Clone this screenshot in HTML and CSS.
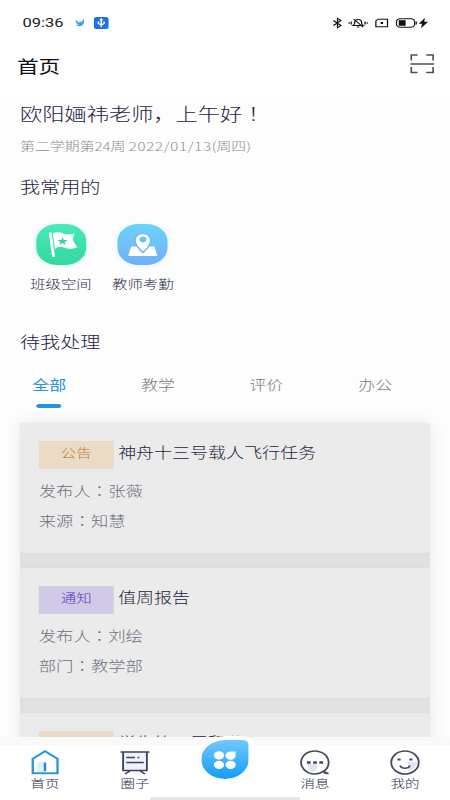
FILE: index.html
```html
<!DOCTYPE html>
<html lang="zh-CN">
<head>
<meta charset="utf-8">
<title>首页</title>
<link rel="stylesheet" href="styles.css">
</head>
<body>
<div class="app">
  <header class="top">
    <div class="status">
      <span class="time">09:36</span>
      <svg class="bird" viewBox="0 0 8 9"><path d="M.3 1.5 3.4 5 3.8 2.8 5 4.2 7.3.4 7 5.5Q5.8 8.5 3.2 8.3L.7 7.2 2.6 6.8Q.5 5 .3 1.5Z" fill="#3da3ea"/></svg>
      <svg class="usb" viewBox="0 0 12 12"><rect width="12" height="12" rx="2.5" fill="#1f6fe5"/><path d="M6 2v8M3.7 4.6v1.8L6 8l2.3-1.6V4.6M5 3.3 6 2l1 1.3" fill="none" stroke="#fff" stroke-width="1.2"/></svg>
      <svg class="sys" viewBox="0 0 77 12" fill="none" stroke="#111" stroke-width="1">
        <path d="M.8 3.5 6.8 8.5 4 10.8V1.2L6.8 3.5.8 8.5"/>
        <path d="M16.5 8.5q1.3-1 1.3-3.2 0-2.8 2.7-2.8t2.7 2.8q0 2.2 1.3 3.2zM19.5 10h2M16.8 2l7.8 8.2M15 4.5v3M26 4.5v3M13.3 5.3v1.4M27.7 5.3v1.4"/>
        <path d="M36.5 2.2H44v7.6h-9.3V4z"/><path d="M38.5 6h2" stroke-width="2"/>
        <rect x="51.2" y="1.7" width="14.5" height="8.6" rx="3"/><path d="M67 4.5v3"/><rect x="53" y="3.2" width="5.5" height="5.6" fill="#111" stroke="none"/>
        <path d="M74 .8 69 6.7h2.6L70.8 11.2l5.7-6.4h-3.2z" fill="#111" stroke="none"/>
      </svg>
    </div>
    <div class="bar">
      <h1>首页</h1>
      <svg class="scan" viewBox="0 0 20 20" fill="none" stroke="#4a5060" stroke-width="1.3"><path d="M1 6.5V1h5M13 1h5.5v5.5M1 13v5.5h5M13 18.5h5.5V13M.3 10h19"/></svg>
    </div>
  </header>

  <main class="content">
    <h2 class="hello">欧阳婳祎老师，上午好<span class="mark" lang="zh-TW">！</span></h2>
    <p class="date">第二学期第24周 <span class="num">2022/01/13</span>(周四)</p>
    <h3 class="common">我常用的</h3>
    <div class="shortcuts">
      <div class="shortcut">
        <svg class="tile green" viewBox="0 0 40 41"><path d="M10 8.5h2.3L15 33h-2.3z" fill="#fff"/><path d="M13.3 9.5Q17 7 21 9.3T30.7 9.5L29 15.8 32.8 23.5Q27 26 22.5 23.7T15 25z" fill="#fff"/><path d="m21 13 1 2.9 3.2.1-2.5 1.9.9 3-2.6-1.8-2.5 1.8.8-3-2.4-1.9 3.2-.1z" fill="#36d5a2"/></svg>
        <span>班级空间</span>
      </div>
      <div class="shortcut">
        <svg class="tile blue" viewBox="0 0 40 41"><path d="M11 22.5h18.5L32 32H8.500z" fill="#fff"/><path d="M20.5 28.5q-6.500-7-6.500-12.300a6.300 6.800 0 0 1 12.600 0q0 5.300-6.100 12.300z" fill="#fff" stroke="#6db9f8" stroke-width="1.3"/><ellipse cx="20.4" cy="15.5" rx="2.8" ry="3" fill="#6ec3fa"/></svg>
        <span>教师考勤</span>
      </div>
    </div>
    <h3 class="todo">待我处理</h3>
    <nav class="tabs"><span class="tab on">全部</span><span class="tab">教学</span><span class="tab">评价</span><span class="tab">办公</span></nav>
    <section class="list">
      <article class="card">
        <div class="head"><span class="tag orange">公告</span><strong>神舟十三号载人飞行任务</strong></div>
        <p>发布人<i lang="zh-TW">：</i>张薇</p><p>来源<i lang="zh-TW">：</i>知慧</p>
      </article>
      <article class="card">
        <div class="head"><span class="tag purple">通知</span><strong>值周报告</strong></div>
        <p>发布人<i lang="zh-TW">：</i>刘绘</p><p>部门<i lang="zh-TW">：</i>教学部</p>
      </article>
      <article class="card">
        <div class="head"><span class="tag orange">公告</span><strong>学生第三周积分</strong></div>
      </article>
    </section>
  </main>

  <footer class="nav">
    <div class="item"><svg viewBox="0 0 24 26" fill="none"><path d="M2.2 9.8 12 2.2l10 7.600v14.500H2.200z" fill="#fff" stroke="#2b98dd" stroke-width="1.9"/><path d="M5.5 13h6v10h-6z" fill="#dceffc"/><path d="M12 13.5v8.800" stroke="#2487cb" stroke-width="1.9"/></svg><span>首页</span></div>
    <div class="item"><svg viewBox="0 0 24 26" fill="none" stroke="#3c4260" stroke-width="1.5"><path d="M2.5 3v19h19V3" fill="#f1f3fc" stroke="none"/><path d="M.5 3h23M2.5 3v18.500h19V3M5 8.500h7M14 8.500h1.500M5 13.500h14M8.500 21.500 4 25M15.500 21.500 20 25"/></svg><span>圈子</span></div>
    <div class="item"></div>
    <div class="item"><svg viewBox="0 0 24 26" fill="none"><path d="M18.5 22.3Q16 25 12 25a11 11.500 0 1 1 7.300-3q.8 2.300 3.500 2.300-2.700.7-4.300-2z" fill="#fff" stroke="#454b5c" stroke-width="1.5"/><path d="M6 15h8q0 5-3 8-4-1-5-8z" fill="#dfe4f8"/><path d="M5.5 13.500h3M10.500 13.500h3M15.500 13.500h3" stroke="#454b5c" stroke-width="2.6"/></svg><span>消息</span></div>
    <div class="item"><svg viewBox="0 0 24 26" fill="none"><ellipse cx="12" cy="13.5" rx="11" ry="11.5" fill="#fff" stroke="#454b5c" stroke-width="1.5"/><path d="M14 13h8q-1 7-7 9z" fill="#dfe4f8"/><path d="M6 10.5h2.500M15.500 10.500H18" stroke="#454b5c" stroke-width="2.2"/><path d="M8 16.500q1 2.800 4 2.800t4-2.800" stroke="#454b5c" stroke-width="1.5"/></svg><span>我的</span></div>
    <div class="center"><svg viewBox="0 0 18 18" fill="#fff"><ellipse cx="4.2" cy="4.3" rx="4.1" ry="4.1"/><path d="M17.5.5v4a4.100 4.100 0 1 1-4-4z"/><ellipse cx="4.2" cy="13.8" rx="4.1" ry="4.1"/><ellipse cx="13.5" cy="13.8" rx="4.1" ry="4.1"/></svg></div>
    <div class="gesture"></div>
  </footer>
</div>
</body>
</html>
```

FILE: styles.css
```css
* { box-sizing: border-box; margin: 0; padding: 0; }
html, body { height: 800px; overflow: hidden; background: #fdfdfd; }
/* the 360-unit wide layout fills the 450px viewport */
.app {
  width: 360px; height: 800px; overflow: hidden;
  display: flex; flex-direction: column;
  transform: scaleX(1.25); transform-origin: 0 0;
  font-family: "Noto Sans CJK SC", sans-serif; font-weight: 300;
  color: #292e48; background: #fdfdfd;
}
.top { height: 95px; background: #fff; flex: none; }
.status { display: flex; align-items: center; height: 45px; padding: 0 17px 0 18px; }
.time { font: 400 13.2px Roboto, sans-serif; color: #222; width: 42px; }
.bird { width: 8px; height: 9px; }
.usb { width: 12px; height: 12px; margin-left: 7px; }
.sys { width: 77px; height: 12px; margin-left: auto; }
.bar { display: flex; justify-content: space-between; align-items: center; height: 44px; padding: 0 12px 0 13.5px; }
h1 { font-size: 17.4px; font-weight: 400; line-height: 24px; color: #111; margin-top: -3px; }
.scan { width: 20px; height: 20px; margin-top: -6px; }
.content { flex: 1; min-height: 0; padding: 0 16px; }
h2, h3 { font-weight: 300; color: #1c2142; }
.hello { font-size: 17.8px; line-height: 26px; margin-top: 5px; white-space: nowrap; }
.date { font-size: 11.95px; line-height: 18px; margin-top: 11px; color: #8d8d8d; }
.num { letter-spacing: .58px; }
h3 { font-size: 16.1px; line-height: 24px; }
.common { margin-top: 19px; }
.shortcuts { display: flex; margin: 26px 0 0; }
.shortcut { width: 65.5px; display: flex; flex-direction: column; align-items: center; font-size: 12.3px; line-height: 18px; white-space: nowrap; }
.tile { width: 40px; height: 41px; border-radius: 17px; margin-bottom: 10px; }
.green { background: linear-gradient(#48e9bc, #32d99c); box-shadow: 0 1px 5px #48e9bc33; }
.blue { background: linear-gradient(#6cd2fc, #71aef6); box-shadow: 0 1px 5px #6cbcfc33; }
.todo { margin-top: 36px; }
.tabs { display: flex; margin: 20px -20px 0; height: 50px; }
.tab { width: 86.9px; text-align: center; font-size: 13.6px; line-height: 22px; color: #757985; }
.on { color: #2494dc; font-weight: 400; }
.on::after { content: ""; display: block; width: 20px; height: 4px; border-radius: 2px; background: #2494dc; margin: 8.5px auto 0; }
.list { display: flex; flex-direction: column; gap: 15px; background: #e1e1e1; box-shadow: 0 0 16px #00000014; border-radius: 2px; }
.card { height: 130px; flex: none; background: #ebebeb; border-radius: 3px; padding: 17.5px 15px; box-shadow: 0 0 5px #00000008; }
.head { display: flex; align-items: center; height: 28px; margin-bottom: 6px; }
.tag { width: 60px; height: 28px; line-height: 24px; text-align: center; font-size: 12.4px; margin-right: 3.5px; }
.orange { background: #eadbc7; color: #bd7a30; }
.purple { background: #d1cae7; color: #5a34b8; }
strong { font-size: 14.4px; font-weight: 300; line-height: 20px; color: #1f2442; margin-top: -5px; white-space: nowrap; }
.card p { font-size: 13.9px; line-height: 30.7px; color: #6c707e; }
i, .mark { font-style: normal; font-family: "Noto Sans CJK TC", sans-serif; }
.nav { position: relative; flex: none; height: 63px; background: #fff; border-top: 8px solid #f9f9f9; display: flex; }
.item { width: 72px; display: flex; flex-direction: column; align-items: center; padding-top: 4px; font-size: 11.6px; line-height: 17px; }
.item svg { width: 24px; height: 26px; }
.center {
  position: absolute; left: 157px; top: -9px; width: 46px; height: 47px;
  border: 4px solid #fff; border-radius: 24px 9px 24px 24px;
  background: linear-gradient(#71c9ff, #159cf8) padding-box;
  display: flex; align-items: center; justify-content: center;
}
.center svg { width: 18px; height: 18px; }
.gesture { position: absolute; left: 120px; bottom: 0; width: 120px; height: 3px; background: #e6e6e6; border-radius: 2px 2px 0 0; }
```
